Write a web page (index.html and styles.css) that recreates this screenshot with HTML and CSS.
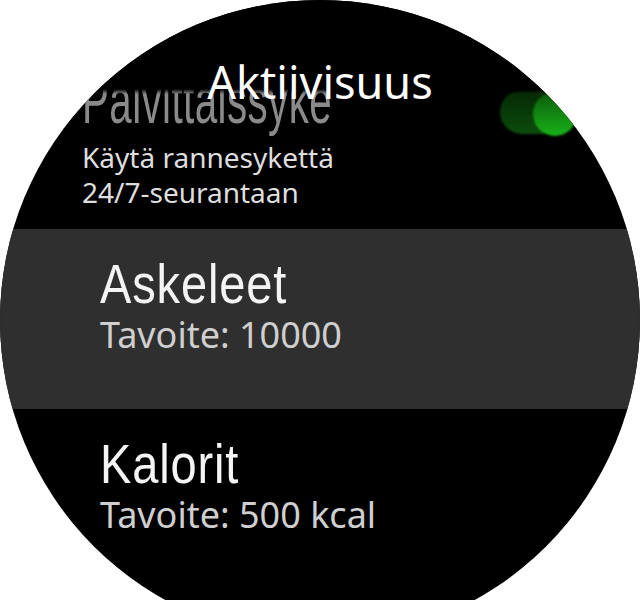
FILE: index.html
```html
<!DOCTYPE html>
<html lang="fi">
<head>
<meta charset="utf-8">
<title>Aktiivisuus</title>
<link rel="stylesheet" href="styles.css">
</head>
<body>
<div class="watch">
  <div class="header"><div class="title">Aktiivisuus</div></div>
  <div class="list">
    <div class="item item-top">
      <div class="text">
        <div class="heading heading-dim">Päivittäissyke</div>
        <div class="sub sub-top">Käytä rannesykettä<br>24/7-seurantaan</div>
      </div>
      <div class="toggle"><div class="knob"></div></div>
    </div>
    <div class="item selected">
      <div class="text">
        <div class="heading">Askeleet</div>
        <div class="sub">Tavoite: 10000</div>
      </div>
    </div>
    <div class="item">
      <div class="text">
        <div class="heading">Kalorit</div>
        <div class="sub">Tavoite: 500 kcal</div>
      </div>
    </div>
  </div>
</div>
</body>
</html>
```
FILE: styles.css
```css
html, body {
  margin: 0;
  padding: 0;
  background: #ffffff;
  overflow: hidden;
}
.watch {
  position: relative;
  width: 640px;
  height: 640px;
  border-radius: 50%;
  background: #000000;
  overflow: hidden;
}
.header {
  position: absolute;
  top: 0;
  left: 0;
  right: 0;
  height: 96px;
  z-index: 2;
  background: linear-gradient(to bottom, #000 0, #000 89px, rgba(0,0,0,0) 94px);
  text-align: center;
}
.title {
  padding-top: 59px;
  font-family: "Noto Sans", "Open Sans", sans-serif;
  font-size: 45px;
  line-height: 45px;
  color: #ffffff;
}
.list {
  display: flex;
  flex-direction: column;
  padding-top: 49px;
}
.item {
  display: flex;
  height: 180px;
  box-sizing: border-box;
  padding: 27px 0 0 100px;
}
.item.selected {
  background: #2f2f2f;
}
.item-top {
  padding: 35px 0 0 82px;
}
.text {
  display: flex;
  flex-direction: column;
  min-width: 0;
}
.heading {
  font-family: "Liberation Sans", Arial, sans-serif;
  font-size: 56px;
  line-height: 56px;
  letter-spacing: 1px;
  color: #f4f4f4;
  white-space: nowrap;
  transform: scaleX(0.84);
  transform-origin: left center;
}
.heading-dim {
  font-size: 48px;
  line-height: 46px;
  letter-spacing: 0.5px;
  color: #8a8a8a;
  transform: scale(0.84, 1.35);
  transform-origin: 0 39px;
}
.sub {
  margin-top: 5px;
  font-family: "Noto Sans", "Open Sans", sans-serif;
  font-size: 36px;
  line-height: 35px;
  color: #cfcfcf;
  white-space: nowrap;
}
.sub-top {
  margin-top: 10px;
  font-size: 28px;
  color: #dedede;
}
.toggle {
  position: relative;
  margin-left: auto;
  margin-right: 63px;
  margin-top: 6px;
  width: 77px;
  height: 44px;
  border-radius: 22px;
  background: linear-gradient(to bottom, #052805, #0c4c0c);
  filter: blur(1px);
}
.knob {
  position: absolute;
  right: 0;
  top: 2px;
  width: 44px;
  height: 44px;
  border-radius: 50%;
  background: linear-gradient(to bottom, #0a5a0a, #19b419);
}
```
